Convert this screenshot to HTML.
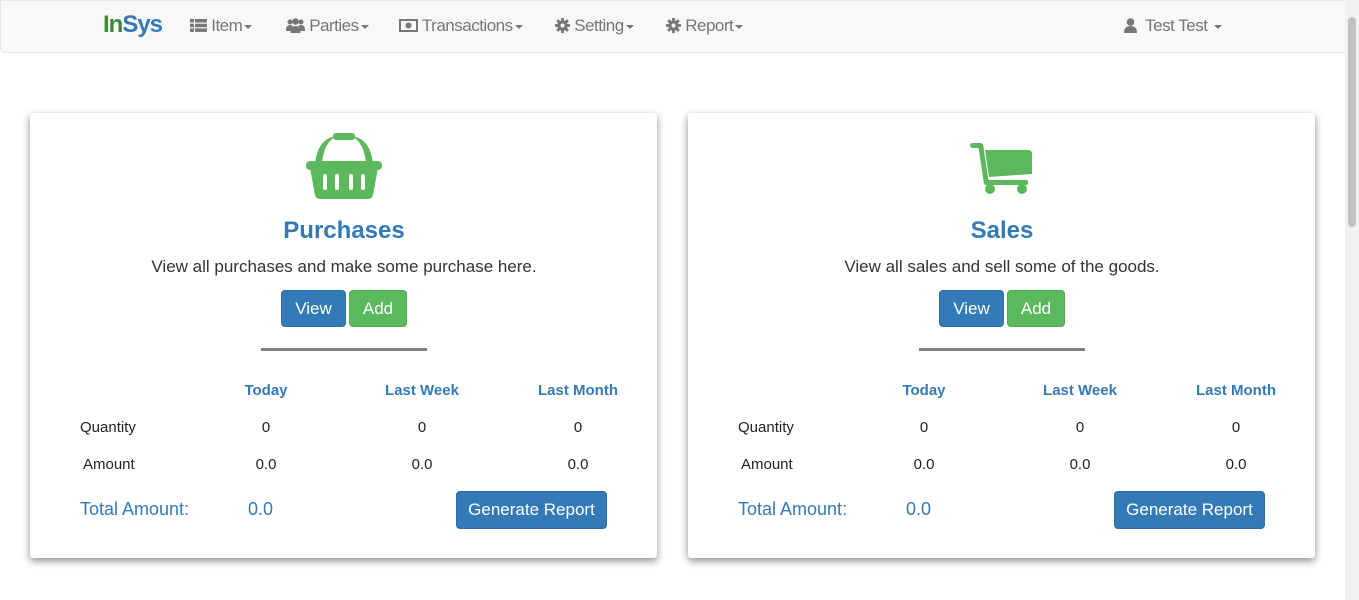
<!DOCTYPE html>
<html><head><style>
body{margin:0;width:1359px;height:600px;background:#fff;font-family:"Liberation Sans",sans-serif;position:relative;overflow:hidden}
.nav{position:absolute;left:0;top:0;width:1344px;height:51px;background:#f8f8f8;border:1px solid #e7e7e7;border-radius:0 0 4px 4px}
.sb{position:absolute;right:0;top:0;width:14px;height:600px;background:#f1f1f1}
.sb i{position:absolute;left:3px;top:17px;width:8px;height:210px;background:#c1c1c1;border-radius:4px}
.ni{position:absolute;top:16px;font-size:17px;color:#777;letter-spacing:-0.5px}
.car{display:inline-block;border-top:4px solid #777;border-left:4px solid transparent;border-right:4px solid transparent;vertical-align:middle;margin-left:2px}
.brand{position:absolute;left:103px;top:11px;font-size:24px;font-weight:bold;letter-spacing:-1px}
.card{position:absolute;top:113px;width:627px;height:445px;background:#fff;border-radius:3px;box-shadow:0 3px 8px rgba(0,0,0,.45)}
.card *{position:absolute}
.c{text-align:center;transform:translateX(-50%);white-space:nowrap}
.t{top:104px;left:314px;font-size:24px;font-weight:bold;color:#337ab7}
.d{top:144px;left:314px;font-size:17px;color:#333}
.btn{top:177px;height:37px;border-radius:4px;color:#fff;font-size:17px;line-height:35px;text-align:center;box-sizing:border-box}
.v{background:#337ab7;border:1px solid #2e6da4}
.a{background:#5cb85c;border:1px solid #4cae4c}
.hr{top:235px;left:231px;width:166px;height:3px;background:#808080}
.h{top:269px;font-size:15px;font-weight:bold;color:#337ab7}
.r{font-size:15px;color:#222}
.tot{top:386px;font-size:18px;color:#337ab7}
.gen{left:426px;top:378px;width:151px;height:38px;background:#337ab7;border:1px solid #2e6da4;border-radius:4px;color:#fff;font-size:17px;line-height:36px;text-align:center;box-sizing:border-box}
</style></head><body>
<div class="nav"></div>
<div class="sb"><i></i></div>
<div class="brand"><span style="color:#3c8a3c">In</span><span style="color:#337ab7">Sys</span></div>
<div class="ni" style="left:190px"><svg width="17" height="13" viewBox="0 0 17 13" style="vertical-align:-1px"><g fill="#777"><rect x="0" y="0" width="4" height="3.5"/><rect x="5" y="0" width="12" height="3.5"/><rect x="0" y="4.7" width="4" height="3.5"/><rect x="5" y="4.7" width="12" height="3.5"/><rect x="0" y="9.4" width="4" height="3.5"/><rect x="5" y="9.4" width="12" height="3.5"/></g></svg> Item<span class="car"></span></div>
<div class="ni" style="left:286px"><svg width="19" height="15" viewBox="0 0 19 15" style="vertical-align:-2px"><g fill="#777"><circle cx="4" cy="4" r="2.5"/><circle cx="15" cy="4" r="2.5"/><circle cx="9.5" cy="3.5" r="3.3"/><path d="M0 12q0-5 4-5 2 0 3 1-2 2-2 5H0z"/><path d="M19 12q0-5-4-5-2 0-3 1 2 2 2 5h5z"/><path d="M4.5 15q0-7 5-7t5 7z"/></g></svg> Parties<span class="car"></span></div>
<div class="ni" style="left:399px"><svg width="19" height="13" viewBox="0 0 19 13" style="vertical-align:-1px"><rect x="1" y="1" width="17" height="11" fill="none" stroke="#777" stroke-width="2"/><circle cx="9.5" cy="6.5" r="3" fill="#777"/></svg> Transactions<span class="car"></span></div>
<div class="ni" style="left:555px"><svg width="15" height="15" viewBox="0 0 16 16" style="vertical-align:-2px"><g fill="#777"><circle cx="8" cy="8" r="5.5"/><g stroke="#777" stroke-width="3"><path d="M8 0v16M0 8h16M2.3 2.3l11.4 11.4M13.7 2.3L2.3 13.7"/></g></g><circle cx="8" cy="8" r="2.2" fill="#f8f8f8"/></svg> Setting<span class="car"></span></div>
<div class="ni" style="left:666px"><svg width="15" height="15" viewBox="0 0 16 16" style="vertical-align:-2px"><g fill="#777"><circle cx="8" cy="8" r="5.5"/><g stroke="#777" stroke-width="3"><path d="M8 0v16M0 8h16M2.3 2.3l11.4 11.4M13.7 2.3L2.3 13.7"/></g></g><circle cx="8" cy="8" r="2.2" fill="#f8f8f8"/></svg> Report<span class="car"></span></div>
<div class="ni" style="left:1124px"><svg width="13" height="15" viewBox="0 0 13 15" style="vertical-align:-2px"><g fill="#777"><circle cx="6.5" cy="4" r="3.8"/><path d="M0 15q0-7 6.5-7t6.5 7z"/></g></svg>&nbsp; Test Test <span class="car"></span></div>

<div class="card" style="left:30px">
<svg style="left:276px;top:20px" width="76" height="67" viewBox="0 0 76 67"><g fill="#5cb85c"><rect x="27" y="0" width="22" height="7" rx="3"/><path d="M9 30Q12 8 26 4h3Q18 10 16 30z"/><path d="M67 30Q64 8 50 4h-3Q58 10 60 30z"/><rect x="0" y="28" width="76" height="9" rx="4"/><path d="M4 35h68l-5 27q-1 4-5 4H14q-4 0-5-4z"/></g><g fill="#fff"><rect x="17" y="41" width="4" height="16" rx="2"/><rect x="29" y="41" width="4" height="16" rx="2"/><rect x="43" y="41" width="4" height="16" rx="2"/><rect x="55" y="41" width="4" height="16" rx="2"/></g></svg>
<div class="t c">Purchases</div>
<div class="d c">View all purchases and make some purchase here.</div>
<div class="btn v" style="left:251px;width:65px">View</div>
<div class="btn a" style="left:319px;width:58px">Add</div>
<div class="hr"></div>
<div class="h c" style="left:236px">Today</div><div class="h c" style="left:392px">Last Week</div><div class="h c" style="left:548px">Last Month</div>
<div class="r" style="left:50px;top:306px">Quantity</div>
<div class="r c" style="left:236px;top:306px">0</div><div class="r c" style="left:392px;top:306px">0</div><div class="r c" style="left:548px;top:306px">0</div>
<div class="r" style="left:53px;top:343px">Amount</div>
<div class="r c" style="left:236px;top:343px">0.0</div><div class="r c" style="left:392px;top:343px">0.0</div><div class="r c" style="left:548px;top:343px">0.0</div>
<div class="tot" style="left:50px">Total Amount:</div><div class="tot" style="left:218px">0.0</div>
<div class="gen">Generate Report</div>
</div>

<div class="card" style="left:688px">
<svg style="left:282px;top:30px" width="62" height="52" viewBox="0 0 62 52"><g fill="#5cb85c"><rect x="0" y="0" width="13" height="5" rx="2.5"/><path d="M8 1h5l6 40h-5z"/><path d="M15 7h43q4 0 4 4v20l-43 3z"/><rect x="14" y="37" width="44" height="5" rx="2"/><circle cx="20" cy="46" r="5"/><circle cx="52" cy="46" r="5"/></g></svg>
<div class="t c">Sales</div>
<div class="d c">View all sales and sell some of the goods.</div>
<div class="btn v" style="left:251px;width:65px">View</div>
<div class="btn a" style="left:319px;width:58px">Add</div>
<div class="hr"></div>
<div class="h c" style="left:236px">Today</div><div class="h c" style="left:392px">Last Week</div><div class="h c" style="left:548px">Last Month</div>
<div class="r" style="left:50px;top:306px">Quantity</div>
<div class="r c" style="left:236px;top:306px">0</div><div class="r c" style="left:392px;top:306px">0</div><div class="r c" style="left:548px;top:306px">0</div>
<div class="r" style="left:53px;top:343px">Amount</div>
<div class="r c" style="left:236px;top:343px">0.0</div><div class="r c" style="left:392px;top:343px">0.0</div><div class="r c" style="left:548px;top:343px">0.0</div>
<div class="tot" style="left:50px">Total Amount:</div><div class="tot" style="left:218px">0.0</div>
<div class="gen">Generate Report</div>
</div>
</body></html>
